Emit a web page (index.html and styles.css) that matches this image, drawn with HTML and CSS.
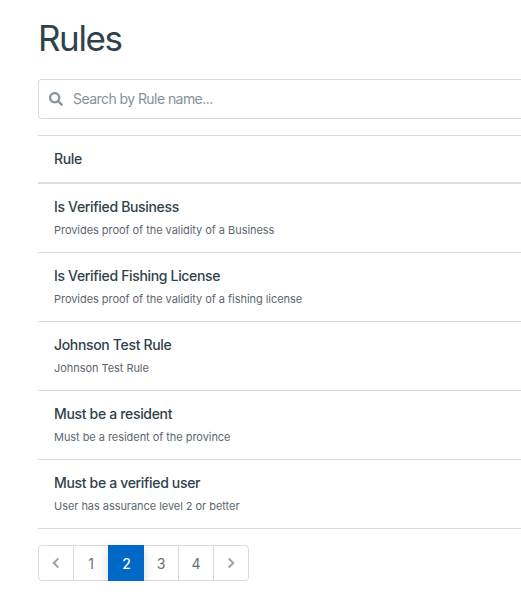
FILE: index.html
```html
<!DOCTYPE html>
<html lang="en">
<head>
<meta charset="utf-8">
<title>Rules</title>
<link rel="stylesheet" href="styles.css">
</head>
<body>
<main class="page">
  <h1 class="title">Rules</h1>
  <label class="search">
    <svg class="search-icon" viewBox="0 0 512 512" aria-hidden="true"><path d="M505 442.700 405.300 343c-4.500-4.500-10.600-7-17-7H372c27.600-35.300 44-79.700 44-128C416 93.100 322.900 0 208 0S0 93.100 0 208s93.100 208 208 208c48.300 0 92.700-16.400 128-44v16.300c0 6.400 2.500 12.500 7 17l99.700 99.700c9.400 9.400 24.600 9.400 33.900 0l28.300-28.300c9.400-9.400 9.400-24.600.1-34zM208 336c-70.700 0-128-57.200-128-128 0-70.700 57.200-128 128-128 70.700 0 128 57.200 128 128 0 70.700-57.200 128-128 128z"/></svg>
    <span class="search-text">Search by Rule name...</span>
  </label>
  <section class="table">
    <div class="head"><span class="name">Rule</span></div>
    <div class="row"><span class="name">Is Verified Business</span><span class="desc">Provides proof of the validity of a Business</span></div>
    <div class="row"><span class="name">Is Verified Fishing License</span><span class="desc">Provides proof of the validity of a fishing license</span></div>
    <div class="row"><span class="name">Johnson Test Rule</span><span class="desc">Johnson Test Rule</span></div>
    <div class="row"><span class="name">Must be a resident</span><span class="desc">Must be a resident of the province</span></div>
    <div class="row"><span class="name">Must be a verified user</span><span class="desc">User has assurance level 2 or better</span></div>
  </section>
  <nav class="pager">
    <a class="item"><svg class="chev" viewBox="0 0 8 12"><path d="M6.300 1.500 1.800 6l4.500 4.500"/></svg></a>
    <a class="item">1</a>
    <a class="item active">2</a>
    <a class="item">3</a>
    <a class="item">4</a>
    <a class="item"><svg class="chev" viewBox="0 0 8 12"><path d="M1.700 1.500l4.500 4.500-4.500 4.500"/></svg></a>
  </nav>
</main>
</body>
</html>
```

FILE: styles.css
```css
* { box-sizing: border-box; }
body { margin: 0; background: #fff; color: #2f424b; font-family: Inter, "Liberation Sans", sans-serif; }
.page { padding: 17px 0 0 38px; }
.title { margin: 0; height: 62px; font-size: 35px; line-height: 42px; font-weight: 400; letter-spacing: -1.4px; }
.search { display: flex; align-items: center; height: 40px; padding-left: 10px; border: 1px solid #d9dcdf; border-right: 0; border-radius: 4px 0 0 4px; }
.search-icon { width: 14px; height: 14px; fill: #8793a0; margin-right: 10px; }
.search-text { padding-bottom: 2px; font-size: 14px; letter-spacing: -0.56px; color: #84919d; }
.table { margin-top: 16px; border-top: 1px solid #dadcde; }
.head { height: 48px; padding: 12px 16px 0; border-bottom: 2px solid #d8dee1; }
.row { height: 69px; padding: 12px 16px 0; border-bottom: 1px solid #d8dcdf; }
.name { display: block; font-size: 14px; line-height: 21px; font-weight: 500; letter-spacing: -0.33px; }
.desc { display: block; margin-top: 5px; font-size: 11px; line-height: 16px; letter-spacing: -0.05px; color: #5c6770; }
.pager { display: flex; width: 211px; height: 36px; margin-top: 16px; border: 1px solid #d8dcdf; border-radius: 4px; }
.item { flex: none; width: 35px; display: flex; align-items: center; justify-content: center; font-size: 14px; line-height: 20px; padding-top: 2px; color: #65707a; border-left: 1px solid #d8dcdf; }
.item:first-child { width: 34px; border-left: 0; }
.active { position: relative; width: 36px; margin: -1px -1px -1px 0; background: #0069c8; color: #fff; font-weight: 500; border-color: #0069c8; box-shadow: 0 5px 12px rgba(0, 0, 0, .15); }
.chev { width: 8px; height: 12px; margin-bottom: 2px; fill: none; stroke: #9ba5af; stroke-width: 2; }
```
